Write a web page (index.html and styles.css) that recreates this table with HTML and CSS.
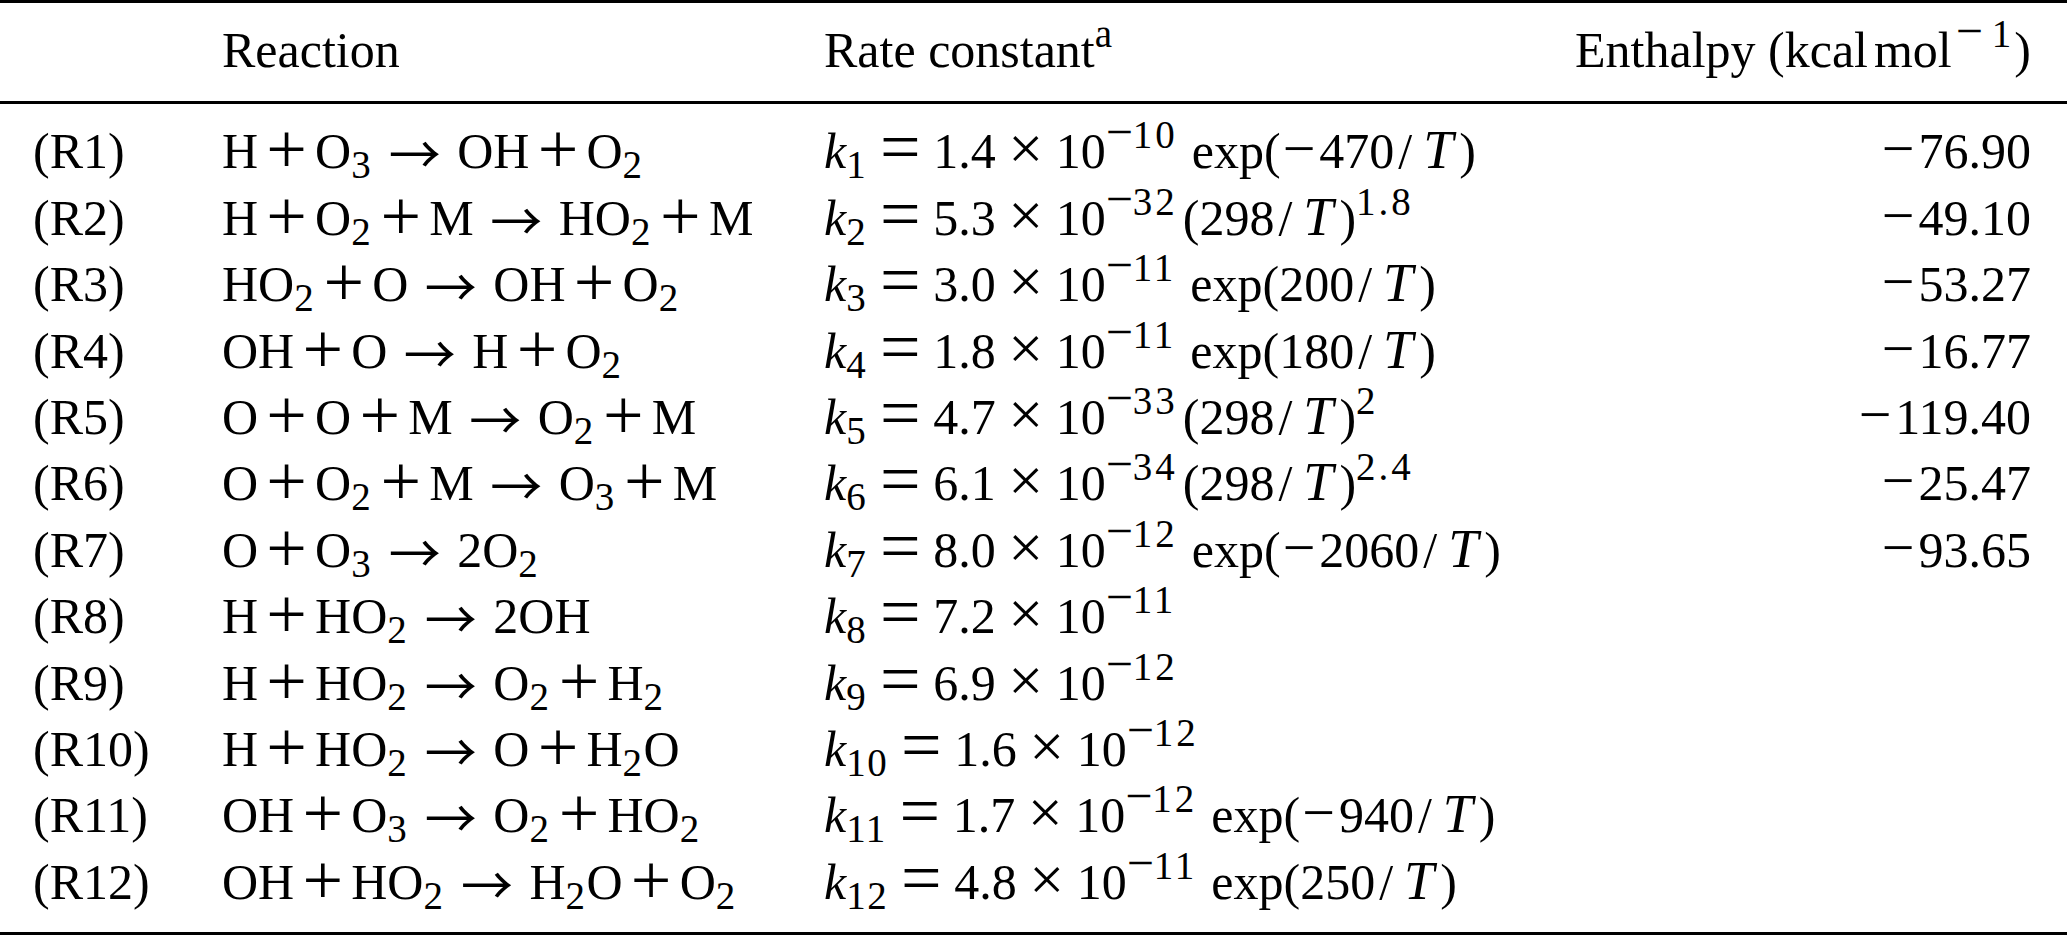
FILE: index.html
```html
<!DOCTYPE html>
<html>
<head>
<meta charset="utf-8">
<title>Reactions</title>
<link rel="stylesheet" href="styles.css">
</head>
<body>
<table class="tbl">
<colgroup><col class="c1"><col class="c2"><col class="c3"><col class="c4"></colgroup>
<thead>
<tr><th class="id"></th><th>Reaction</th><th>Rate constant<sup class="sp">a</sup></th><th class="num">Enthalpy (kcal<span class="thin">mol</span><sup class="sp"><span class="smn hd">−</span>1</sup>)</th></tr>
</thead>
<tbody>
<tr><td class="id">(R1)</td><td>H<span class="pl">+</span>O<sub class="sb">3</sub><span class="ar">→</span>OH<span class="pl">+</span>O<sub class="sb">2</sub></td><td><i>k</i><sub class="sb">1</sub><span class="eq">=</span>1.4<span class="tm">×</span>10<sup class="sp"><span class="smn">−</span>10</sup><span class="fn">exp(<span class="mn">−</span>470<span class="sl">/</span><i class="vt">T</i>)</span></td><td class="num"><span class="mn">−</span>76.90</td></tr>
<tr><td class="id">(R2)</td><td>H<span class="pl">+</span>O<sub class="sb">2</sub><span class="pl">+</span>M<span class="ar">→</span>HO<sub class="sb">2</sub><span class="pl">+</span>M</td><td><i>k</i><sub class="sb">2</sub><span class="eq">=</span>5.3<span class="tm">×</span>10<sup class="sp"><span class="smn">−</span>32</sup><span class="pw">(298<span class="sl">/</span><i class="vt">T</i>)</span><sup class="sp">1.8</sup></td><td class="num"><span class="mn">−</span>49.10</td></tr>
<tr><td class="id">(R3)</td><td>HO<sub class="sb">2</sub><span class="pl">+</span>O<span class="ar">→</span>OH<span class="pl">+</span>O<sub class="sb">2</sub></td><td><i>k</i><sub class="sb">3</sub><span class="eq">=</span>3.0<span class="tm">×</span>10<sup class="sp"><span class="smn">−</span>11</sup><span class="fn">exp(200<span class="sl">/</span><i class="vt">T</i>)</span></td><td class="num"><span class="mn">−</span>53.27</td></tr>
<tr><td class="id">(R4)</td><td>OH<span class="pl">+</span>O<span class="ar">→</span>H<span class="pl">+</span>O<sub class="sb">2</sub></td><td><i>k</i><sub class="sb">4</sub><span class="eq">=</span>1.8<span class="tm">×</span>10<sup class="sp"><span class="smn">−</span>11</sup><span class="fn">exp(180<span class="sl">/</span><i class="vt">T</i>)</span></td><td class="num"><span class="mn">−</span>16.77</td></tr>
<tr><td class="id">(R5)</td><td>O<span class="pl">+</span>O<span class="pl">+</span>M<span class="ar">→</span>O<sub class="sb">2</sub><span class="pl">+</span>M</td><td><i>k</i><sub class="sb">5</sub><span class="eq">=</span>4.7<span class="tm">×</span>10<sup class="sp"><span class="smn">−</span>33</sup><span class="pw">(298<span class="sl">/</span><i class="vt">T</i>)</span><sup class="sp">2</sup></td><td class="num"><span class="mn">−</span>119.40</td></tr>
<tr><td class="id">(R6)</td><td>O<span class="pl">+</span>O<sub class="sb">2</sub><span class="pl">+</span>M<span class="ar">→</span>O<sub class="sb">3</sub><span class="pl">+</span>M</td><td><i>k</i><sub class="sb">6</sub><span class="eq">=</span>6.1<span class="tm">×</span>10<sup class="sp"><span class="smn">−</span>34</sup><span class="pw">(298<span class="sl">/</span><i class="vt">T</i>)</span><sup class="sp">2.4</sup></td><td class="num"><span class="mn">−</span>25.47</td></tr>
<tr><td class="id">(R7)</td><td>O<span class="pl">+</span>O<sub class="sb">3</sub><span class="ar">→</span>2O<sub class="sb">2</sub></td><td><i>k</i><sub class="sb">7</sub><span class="eq">=</span>8.0<span class="tm">×</span>10<sup class="sp"><span class="smn">−</span>12</sup><span class="fn">exp(<span class="mn">−</span>2060<span class="sl">/</span><i class="vt">T</i>)</span></td><td class="num"><span class="mn">−</span>93.65</td></tr>
<tr><td class="id">(R8)</td><td>H<span class="pl">+</span>HO<sub class="sb">2</sub><span class="ar">→</span>2OH</td><td><i>k</i><sub class="sb">8</sub><span class="eq">=</span>7.2<span class="tm">×</span>10<sup class="sp"><span class="smn">−</span>11</sup></td><td class="num"></td></tr>
<tr><td class="id">(R9)</td><td>H<span class="pl">+</span>HO<sub class="sb">2</sub><span class="ar">→</span>O<sub class="sb">2</sub><span class="pl">+</span>H<sub class="sb">2</sub></td><td><i>k</i><sub class="sb">9</sub><span class="eq">=</span>6.9<span class="tm">×</span>10<sup class="sp"><span class="smn">−</span>12</sup></td><td class="num"></td></tr>
<tr><td class="id">(R10)</td><td>H<span class="pl">+</span>HO<sub class="sb">2</sub><span class="ar">→</span>O<span class="pl">+</span>H<sub class="sb">2</sub>O</td><td><i>k</i><sub class="sb">10</sub><span class="eq">=</span>1.6<span class="tm">×</span>10<sup class="sp"><span class="smn">−</span>12</sup></td><td class="num"></td></tr>
<tr><td class="id">(R11)</td><td>OH<span class="pl">+</span>O<sub class="sb">3</sub><span class="ar">→</span>O<sub class="sb">2</sub><span class="pl">+</span>HO<sub class="sb">2</sub></td><td><i>k</i><sub class="sb">11</sub><span class="eq">=</span>1.7<span class="tm">×</span>10<sup class="sp"><span class="smn">−</span>12</sup><span class="fn">exp(<span class="mn">−</span>940<span class="sl">/</span><i class="vt">T</i>)</span></td><td class="num"></td></tr>
<tr><td class="id">(R12)</td><td>OH<span class="pl">+</span>HO<sub class="sb">2</sub><span class="ar">→</span>H<sub class="sb">2</sub>O<span class="pl">+</span>O<sub class="sb">2</sub></td><td><i>k</i><sub class="sb">12</sub><span class="eq">=</span>4.8<span class="tm">×</span>10<sup class="sp"><span class="smn">−</span>11</sup><span class="fn">exp(250<span class="sl">/</span><i class="vt">T</i>)</span></td><td class="num"></td></tr>
</tbody>
</table>
</body>
</html>
```

FILE: styles.css
```css
html, body {
  margin: 0;
  padding: 0;
  background: #ffffff;
}

body {
  width: 2067px;
  color: #000000;
  font-family: "Liberation Serif", "Times New Roman", serif;
}

.tbl {
  width: 2067px;
  border-collapse: separate;
  border-spacing: 0;
  table-layout: fixed;
  font-size: 50px;
  line-height: 66.4px;
}

.c1 { width: 222px; }
.c2 { width: 602px; }
.c3 { width: 700px; }

.tbl th,
.tbl td {
  padding: 0;
  font-weight: normal;
  text-align: left;
  vertical-align: top;
  white-space: nowrap;
}

.tbl thead th {
  border-top: 3px solid #000000;
  border-bottom: 3px solid #000000;
  padding-top: 14.25px;
  padding-bottom: 17.35px;
}

.tbl tbody tr:first-child td {
  padding-top: 14.3px;
}

.tbl tbody tr:last-child td {
  padding-bottom: 17px;
  border-bottom: 3px solid #000000;
}

.tbl .id {
  text-indent: 33px;
}

.tbl .num {
  text-align: right;
  padding-right: 36px;
}

.tbl i {
  font-style: italic;
}

.sl {
  margin-left: 4px;
  margin-right: 2px;
}

.vt {
  font-size: 54px;
  line-height: 0;
  margin-left: 9px;
  margin-right: 6px;
}

/* scripts */
.sb,
.sp {
  font-size: 39px;
  line-height: 0;
}

.sb {
  vertical-align: -10px;
  letter-spacing: 1.5px;
}

.sp {
  vertical-align: 20px;
  letter-spacing: 3px;
}

.smn {
  font-size: 48px;
  letter-spacing: 0;
}

.smn.hd {
  margin-left: 4px;
  margin-right: 9px;
}

/* operators */
.pl,
.eq,
.tm,
.ar {
  display: inline-block;
  line-height: 0;
  text-align: center;
  letter-spacing: 0;
}

.pl {
  width: 57px;
  font-size: 72px;
  vertical-align: -5px;
}

.eq {
  width: 66px;
  font-size: 72px;
  vertical-align: -3px;
}

.tm {
  width: 60px;
  font-size: 62px;
  vertical-align: -1px;
}

.ar {
  width: 85px;
  font-family: "Noto Sans CJK JP", "DejaVu Sans", sans-serif;
  font-size: 52px;
  vertical-align: -6px;
}

.mn {
  font-size: 58px;
  line-height: 0;
  margin-left: 2px;
  margin-right: 4px;
}

.fn {
  margin-left: 14px;
}

.pw {
  margin-left: 5px;
}

.thin {
  margin-left: 6px;
}
```
